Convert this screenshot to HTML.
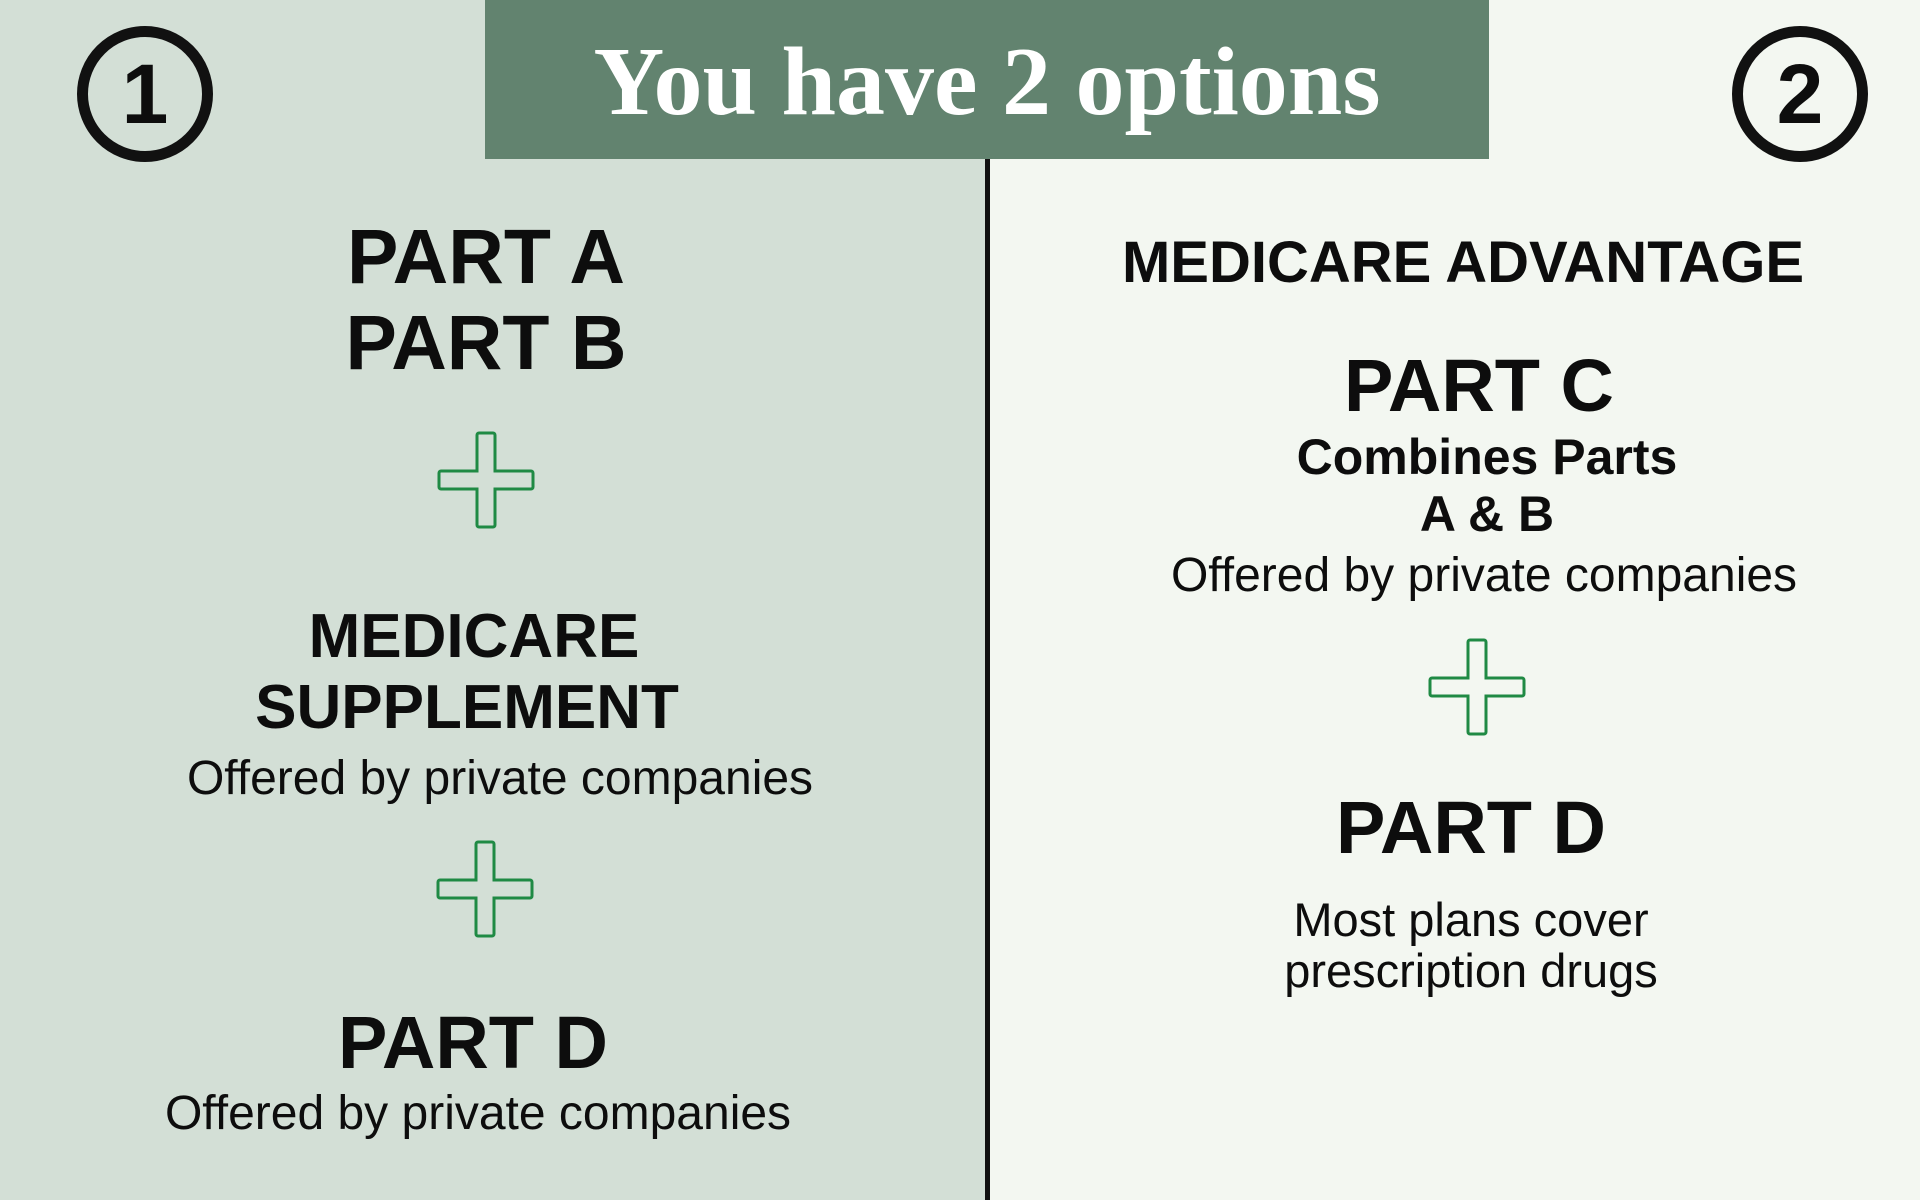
<!DOCTYPE html>
<html><head><meta charset="utf-8"><style>
*{margin:0;padding:0;box-sizing:border-box}
body{width:1920px;height:1200px;position:relative;overflow:hidden;font-family:"Liberation Sans",sans-serif;color:#0d0d0d}
.l{position:absolute;left:0;top:0;width:987px;height:1200px;background:#d3dfd6}
.r{position:absolute;left:987px;top:0;width:933px;height:1200px;background:#f3f7f1}
.div{position:absolute;left:985px;top:159px;width:5px;height:1041px;background:#111}
.hdr{position:absolute;left:485px;top:0;width:1004px;height:159px;background:#62836f;color:#fff;font-family:"Liberation Serif",serif;font-weight:bold;font-size:98px;text-align:center;line-height:165px}
.c{position:absolute;width:800px;text-align:center;white-space:nowrap}
.b{font-weight:bold}
.circ{position:absolute;width:136px;height:136px;border:11px solid #111;border-radius:50%;text-align:center;font-size:84px;line-height:114px;font-weight:bold}
svg{position:absolute}
</style></head><body>
<div class="l"></div><div class="r"></div><div class="div"></div>
<div class="hdr">You have 2 options</div>
<div class="circ" style="left:77px;top:26px">1</div>
<div class="circ" style="left:1732px;top:26px">2</div>

<div class="c b" style="left:86px;top:219px;font-size:77px;line-height:77px">PART A</div>
<div class="c b" style="left:86px;top:305px;font-size:77px;line-height:77px">PART B</div>
<svg style="left:437px;top:431px" width="98" height="98" viewBox="0 0 98 98"><path d="M42 2h14a2 2 0 0 1 2 2v36h36a2 2 0 0 1 2 2v14a2 2 0 0 1-2 2H58v36a2 2 0 0 1-2 2H42a2 2 0 0 1-2-2V58H4a2 2 0 0 1-2-2V42a2 2 0 0 1 2-2h36V4a2 2 0 0 1 2-2z" fill="none" stroke="#1f8a44" stroke-width="3"/></svg>
<div class="c b" style="left:74px;top:603px;font-size:62px;line-height:68px">MEDICARE</div>
<div class="c b" style="left:67px;top:674px;font-size:62px;line-height:68px">SUPPLEMENT</div>
<div class="c" style="left:100px;top:752px;font-size:48px;line-height:54px">Offered by private companies</div>
<svg style="left:436px;top:840px" width="98" height="98" viewBox="0 0 98 98"><path d="M42 2h14a2 2 0 0 1 2 2v36h36a2 2 0 0 1 2 2v14a2 2 0 0 1-2 2H58v36a2 2 0 0 1-2 2H42a2 2 0 0 1-2-2V58H4a2 2 0 0 1-2-2V42a2 2 0 0 1 2-2h36V4a2 2 0 0 1 2-2z" fill="none" stroke="#1f8a44" stroke-width="3"/></svg>
<div class="c b" style="left:73px;top:1006px;font-size:74px;line-height:74px">PART D</div>
<div class="c" style="left:78px;top:1087px;font-size:48px;line-height:54px">Offered by private companies</div>

<div class="c b" style="left:1063px;top:232px;font-size:58px;line-height:62px">MEDICARE ADVANTAGE</div>
<div class="c b" style="left:1079px;top:349px;font-size:74px;line-height:74px">PART C</div>
<div class="c b" style="left:1087px;top:429px;font-size:50px;line-height:56px">Combines Parts</div>
<div class="c b" style="left:1087px;top:486px;font-size:50px;line-height:56px">A &amp; B</div>
<div class="c" style="left:1084px;top:549px;font-size:48px;line-height:54px">Offered by private companies</div>
<svg style="left:1428px;top:638px" width="98" height="98" viewBox="0 0 98 98"><path d="M42 2h14a2 2 0 0 1 2 2v36h36a2 2 0 0 1 2 2v14a2 2 0 0 1-2 2H58v36a2 2 0 0 1-2 2H42a2 2 0 0 1-2-2V58H4a2 2 0 0 1-2-2V42a2 2 0 0 1 2-2h36V4a2 2 0 0 1 2-2z" fill="none" stroke="#1f8a44" stroke-width="3"/></svg>
<div class="c b" style="left:1071px;top:791px;font-size:74px;line-height:74px">PART D</div>
<div class="c" style="left:1071px;top:893px;font-size:47px;line-height:54px">Most plans cover</div>
<div class="c" style="left:1071px;top:944px;font-size:47px;line-height:54px">prescription drugs</div>
</body></html>
